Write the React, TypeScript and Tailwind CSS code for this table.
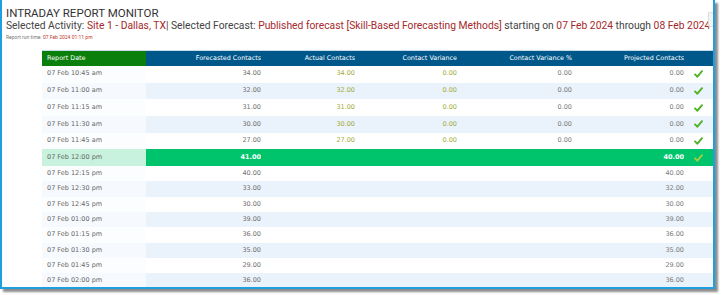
import React from "react";

type Row = {
  d: string;
  f: string;
  a?: string;
  v?: string;
  vp?: string;
  p: string;
  check?: boolean;
  hl?: boolean;
};

const rows: Row[] = [
  { d: "07 Feb 10:45 am", f: "34.00", a: "34.00", v: "0.00", vp: "0.00", p: "0.00", check: true },
  { d: "07 Feb 11:00 am", f: "32.00", a: "32.00", v: "0.00", vp: "0.00", p: "0.00", check: true },
  { d: "07 Feb 11:15 am", f: "31.00", a: "31.00", v: "0.00", vp: "0.00", p: "0.00", check: true },
  { d: "07 Feb 11:30 am", f: "30.00", a: "30.00", v: "0.00", vp: "0.00", p: "0.00", check: true },
  { d: "07 Feb 11:45 am", f: "27.00", a: "27.00", v: "0.00", vp: "0.00", p: "0.00", check: true },
  { d: "07 Feb 12:00 pm", f: "41.00", p: "40.00", check: true, hl: true },
  { d: "07 Feb 12:15 pm", f: "40.00", p: "40.00" },
  { d: "07 Feb 12:30 pm", f: "33.00", p: "32.00" },
  { d: "07 Feb 12:45 pm", f: "30.00", p: "30.00" },
  { d: "07 Feb 01:00 pm", f: "39.00", p: "39.00" },
  { d: "07 Feb 01:15 pm", f: "36.00", p: "36.00" },
  { d: "07 Feb 01:30 pm", f: "35.00", p: "35.00" },
  { d: "07 Feb 01:45 pm", f: "29.00", p: "29.00" },
  { d: "07 Feb 02:00 pm", f: "36.00", p: "36.00" },
];

function Tick({ light }: { light?: boolean }) {
  return (
    <svg width="9" height="8" viewBox="0 0 9 8" className="mx-auto">
      <path
        d="M1 4.4 L3.4 6.7 L8 1.2"
        fill="none"
        stroke={light ? "#9fcf45" : "#4fb326"}
        strokeWidth="1.9"
        strokeLinecap="round"
        strokeLinejoin="round"
      />
    </svg>
  );
}

const grid = "grid grid-cols-[104px_115px_94px_102px_115px_112px_1fr] items-center";

export default function App() {
  return (
    <div className="w-[722px] h-[295px] bg-white">
      <div className="relative w-[715px] h-[289px] border-x-2 border-b-2 border-[#1e9fe0] bg-white shadow-[3px_3px_2px_rgba(0,0,0,0.45)] overflow-hidden">
        {/* cut-off control at the right edge */}
        <div className="absolute right-0 top-[12px] w-[5px] h-[15px] rounded-l-[2px] border border-r-0 border-[#dcdcdc] bg-[#f3f3f3]" />

        {/* Title block */}
        <div className="pl-[4px] pt-[6px] font-['Roboto',sans-serif]">
          <div className="text-[11.5px] leading-[14px] text-[#333]">INTRADAY REPORT MONITOR</div>
          <div className="text-[10.3px] leading-[11px] text-[#444] whitespace-nowrap">
            Selected Activity: <span className="text-[#a5282c]">Site 1 - Dallas, TX</span>| Selected Forecast:{" "}
            <span className="text-[#a5282c]">Published forecast [Skill-Based Forecasting Methods]</span> starting on{" "}
            <span className="text-[#a5282c]">07 Feb 2024</span> through{" "}
            <span className="text-[#a5282c]">08 Feb 2024</span>
          </div>
          <div className="mt-[3px] text-[5px] leading-[6px] text-[#777]">
            Report run time: <span className="text-[#c0392b]">07 Feb 2024 01:11 pm</span>
          </div>
        </div>

        {/* Table */}
        <div className="ml-[40px] mt-[10px] border-t border-[#c9dbe8] font-['DejaVu_Sans',sans-serif]">
          <div className={`${grid} h-[15px] text-[6.4px] text-white`}>
            <div className="h-full flex items-center pl-[5px] bg-[#0a7f0c]">Report Date</div>
            <div className="h-full flex items-center justify-end bg-[#00578a]">Forecasted Contacts</div>
            <div className="h-full flex items-center justify-end bg-[#00578a]">Actual Contacts</div>
            <div className="h-full flex items-center justify-end bg-[#00578a]">Contact Variance</div>
            <div className="h-full flex items-center justify-end bg-[#00578a]">Contact Variance %</div>
            <div className="h-full flex items-center justify-end bg-[#00578a]">Projected Contacts</div>
            <div className="h-full bg-[#00578a]" />
          </div>

          {rows.map((r, i) => {
            const tall = i < 6;
            const alt = i % 2 === 1;
            if (r.hl) {
              return (
                <div key={r.d} className={`${grid} h-[16.7px] text-[6.5px]`}>
                  <div className="h-full flex items-center pl-[5px] bg-[#c8f2dd] text-[#666]">{r.d}</div>
                  <div className="h-full flex items-center justify-end bg-[#00c46c] text-white font-bold">{r.f}</div>
                  <div className="h-full bg-[#00c46c]" />
                  <div className="h-full bg-[#00c46c]" />
                  <div className="h-full bg-[#00c46c]" />
                  <div className="h-full flex items-center justify-end bg-[#00c46c] text-white font-bold">{r.p}</div>
                  <div className="h-full flex items-center bg-[#00c46c]">
                    <Tick light />
                  </div>
                </div>
              );
            }
            return (
              <div
                key={r.d}
                className={`${grid} ${tall ? "h-[16.7px]" : "h-[15.33px]"} text-[6.5px] ${alt ? "bg-[#eaf2fb]" : "bg-white"}`}
              >
                <div className={`h-full flex items-center pl-[5px] text-[#666] ${alt ? "bg-[#f6f9fd]" : "bg-[#fcfdfe]"}`}>
                  {r.d}
                </div>
                <div className="text-right text-[#707070]">{r.f}</div>
                <div className="text-right text-[#a2ab3a]">{r.a}</div>
                <div className="text-right text-[#a2ab3a]">{r.v}</div>
                <div className="text-right text-[#7a7a7a]">{r.vp}</div>
                <div className="text-right text-[#7a7a7a]">{r.p}</div>
                <div className="flex items-center">{r.check && <Tick />}</div>
              </div>
            );
          })}
        </div>
      </div>
    </div>
  );
}
